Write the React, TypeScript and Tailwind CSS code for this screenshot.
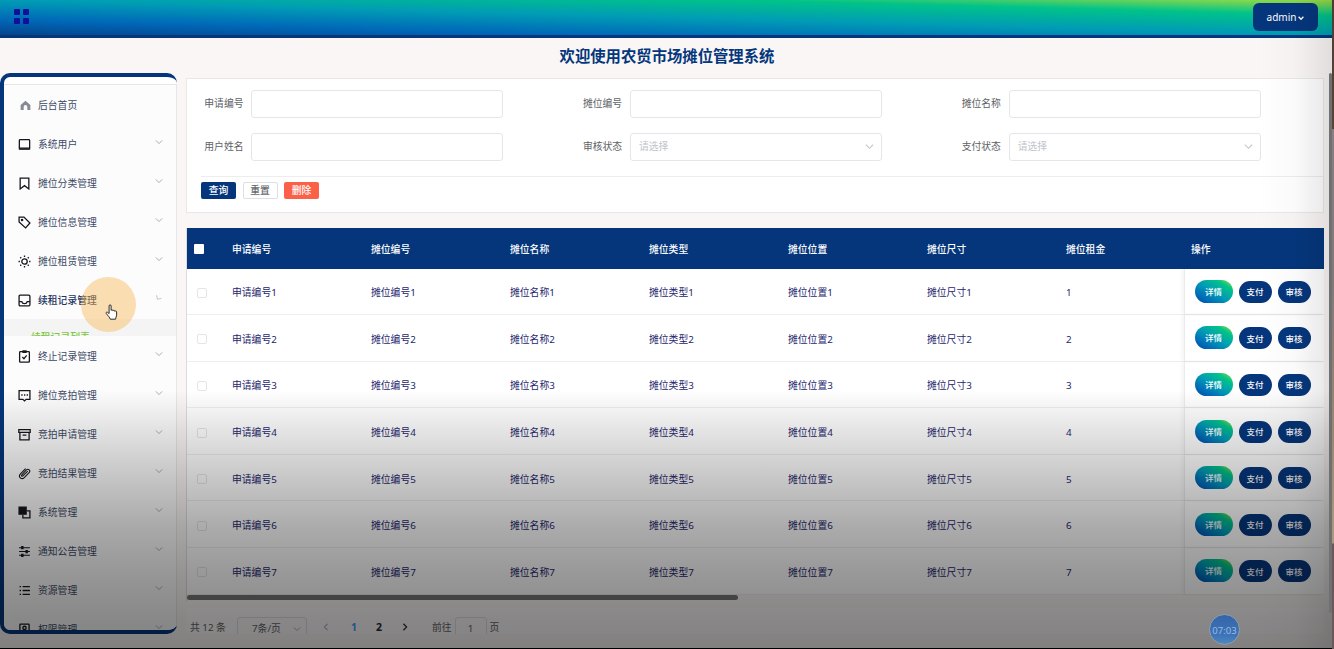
import type { ReactNode } from "react";

interface MenuItem {
  label: string;
  icon: ReactNode;
  open?: boolean;
}

const MENU: MenuItem[] = [
  {
    label: "系统用户",
    icon: (
      <>
        <rect x="2.500" y="3" width="19" height="17" rx="1.5" />
        <path d="M1.500 19.500h21" strokeWidth="5" className="opacity-70" />
      </>
    ),
  },
  { label: "摊位分类管理", icon: <path d="M4 2h16v20l-8-6-8 6z" /> },
  {
    label: "摊位信息管理",
    icon: (
      <>
        <path d="M2 2h9l11 11-8 9L2 11z" />
        <circle cx="7.5" cy="7.5" r="1.2" />
      </>
    ),
  },
  {
    label: "摊位租赁管理",
    icon: (
      <>
        <circle cx="12" cy="12" r="5" />
        <path d="M12 1v2.5M12 20.5V23M1 12h2.5M20.5 12H23M4.2 4.2 6 6M18 18l1.8 1.8M4.2 19.8 6 18M18 6l1.8-1.8" />
      </>
    ),
  },
  {
    label: "续租记录管理",
    open: true,
    icon: (
      <>
        <rect x="2" y="2" width="20" height="20" rx="2" />
        <path d="M2 14h5c1 5 9 5 10 0h5" />
      </>
    ),
  },
  {
    label: "终止记录管理",
    icon: (
      <>
        <rect x="3" y="3" width="18" height="19.500" rx="1.500" />
        <path d="M8 3h8" strokeWidth="5" />
        <path d="m8 13 3 3 5-6" />
      </>
    ),
  },
  {
    label: "摊位竞拍管理",
    icon: (
      <>
        <path d="M2 3h20v16h-7l-3 3-3-3H2z" />
        <path d="M6 11h2.500M11 11h2.500M16 11h2.500" strokeWidth="3" />
      </>
    ),
  },
  {
    label: "竞拍申请管理",
    icon: <path d="M1.500 3h21v5h-21zM3.500 8v14h17V8M8.500 13h7" />,
  },
  {
    label: "竞拍结果管理",
    icon: (
      <path
        d="m18 7.500-9 9c-1.500 1.500-3.500-.5-2-2L15.500 5.500c3.500-3.500 8.500 1 5 5L11.500 19.500C6.500 24.500-.5 18 4.500 12.500l9.500-9.500"
        strokeWidth="2"
      />
    ),
  },
  {
    label: "系统管理",
    icon: (
      <>
        <path d="M2 2h13v13H2z" fill="currentColor" />
        <path d="M16 9h6v13H9v-6" />
      </>
    ),
  },
  {
    label: "通知公告管理",
    icon: (
      <>
        <path d="M2 5h20M2 12h20M2 19h20" strokeWidth="2" />
        <path d="M8 2v6M16 9v6M8 16v6" strokeWidth="4.500" />
      </>
    ),
  },
  {
    label: "资源管理",
    icon: <path d="M3 5h2.500M8.500 5H22M3 12h2.500M8.500 12H22M3 19h2.500M8.500 19H22" />,
  },
  {
    label: "权限管理",
    icon: (
      <>
        <rect x="3.500" y="2" width="17" height="20" rx="1" />
        <circle cx="12" cy="9" r="3" />
        <path d="M6 19c1-6 11-6 12 0" />
      </>
    ),
  },
];

const COLUMNS = ["申请编号", "摊位编号", "摊位名称", "摊位类型", "摊位位置", "摊位尺寸", "摊位租金"];
const ROWS = [1, 2, 3, 4, 5, 6, 7];

function Chevron({ className }: { className: string }) {
  return (
    <svg viewBox="0 0 10 10" className={className} fill="none" stroke="currentColor" strokeWidth="1.200">
      <path d="m1 3 4 4 4-4" />
    </svg>
  );
}

function Sidebar() {
  return (
    <aside className="flex h-[561px] w-[177px] shrink-0 flex-col overflow-hidden rounded-[10px] border-y-[4px] border-l-[4px] border-[#05367c] bg-white pt-[7px]">
      <nav className="flex w-full flex-col border-t border-r border-[#e6e6e8] bg-[#fcfcfc] text-[#3c4a66]">
        <div className="flex h-[39px] shrink-0 items-center pl-4">
          <svg viewBox="0 0 12 12" className="mt-px size-[11px] fill-[#868a94]">
            <path d="M6 .8 11.300 5.500V11H8V7.500a2 2 0 0 0-4 0V11H.7V5.500z" />
          </svg>
          <span className="mt-px ml-[7px]">后台首页</span>
        </div>
        {MENU.map((item) => (
          <div key={item.label} className="shrink-0">
            <div className="flex h-[39px] items-center pr-[13px] pl-[14px]">
              <svg
                viewBox="0 0 24 24"
                className="mt-px size-[13px] text-[#15171c]"
                fill="none"
                stroke="currentColor"
                strokeWidth="2.400"
              >
                {item.icon}
              </svg>
              <span className={item.open ? "mt-px ml-[7px] font-medium text-[#1d3561]" : "mt-px ml-[7px]"}>{item.label}</span>
              {item.open ? (
                <svg viewBox="0 0 10 10" className="mb-[4px] ml-auto size-2 text-[#b4b8be]" fill="none" stroke="currentColor">
                  <path d="M2 1.500l1 5 5-1" />
                </svg>
              ) : (
                <Chevron className="mb-[3px] ml-auto size-2 text-[#a4a8ae]" />
              )}
            </div>
            {item.open && (
              <div className="h-[17px] overflow-hidden bg-[#f4f4f4] pt-[11px] pl-[27px] leading-[15px] font-medium text-[#7cc83c]">
                续租记录列表
              </div>
            )}
          </div>
        ))}
      </nav>
    </aside>
  );
}

function Field({ label, select }: { label: string; select?: boolean }) {
  return (
    <div className="flex w-[378.700px] items-center">
      <span className="w-[39px] whitespace-nowrap text-[#606266]">{label}</span>
      <div className="ml-2 flex h-7 w-[252px] items-center justify-between rounded-[3px] border border-[#e4e6e9] bg-white px-2 text-[#c0c4cc]">
        {select && (
          <>
            <span>请选择</span>
            <Chevron className="-mr-px size-[9px]" />
          </>
        )}
      </div>
    </div>
  );
}

function SearchPanel() {
  return (
    <section className="h-[135px] border border-[#e9e7e7] bg-white pt-[10.500px]">
      <div className="grid gap-y-[15px] pl-[17.300px]">
        <div className="flex">
          <Field label="申请编号" />
          <Field label="摊位编号" />
          <Field label="摊位名称" />
        </div>
        <div className="flex">
          <Field label="用户姓名" />
          <Field label="审核状态" select />
          <Field label="支付状态" select />
        </div>
      </div>
      <div className="mt-[15px] ml-[14px] flex gap-[6.500px] border-t border-[#ededed] pt-[5.500px] font-medium">
        <button className="h-[17px] w-[35px] rounded-[2px] bg-[#05367c] leading-[18px] text-white">查询</button>
        <button className="h-[17px] w-[35px] rounded-[2px] border border-[#dcdfe6] leading-[16px] text-[#66696e]">重置</button>
        <button className="h-[17px] w-[35px] rounded-[2px] bg-[#fb6048] leading-[18px] text-white">删除</button>
      </div>
    </section>
  );
}

function DataTable() {
  return (
    <section className="mt-[15px] border-l border-[#dcdcdf]">
      <div className="flex h-[40.500px] items-center bg-[#05367c] pt-[2px] font-medium text-white">
        <div className="w-[45px] pl-[7px]">
          <div className="size-[10px] rounded-[1px] bg-white" />
        </div>
        {COLUMNS.map((col) => (
          <div key={col} className="w-[139px]">
            {col}
          </div>
        ))}
        <div className="-ml-[14px]">操作</div>
      </div>
      {ROWS.map((n) => (
        <div key={n} className="flex h-[46.600px] border-b border-[#eeeeef] bg-white text-[#26266e]">
          <div className="flex min-w-0 flex-1 items-center pt-[3px]">
            <div className="w-[45px] shrink-0 pl-[9.500px]">
              <div className="size-[10px] rounded-[2px] border border-[#e3e5e9]" />
            </div>
            {COLUMNS.map((col, i) => (
              <div key={col} className="w-[139px] shrink-0">
                {i === COLUMNS.length - 1 ? n : `${col}${n}`}
              </div>
            ))}
          </div>
          <div className="flex w-[140.500px] items-center border-l border-[#ebebed] pl-[10px] text-[8.500px] font-medium text-white shadow-[-2px_0_4px_rgba(0,0,0,0.05)]">
            <button className="h-[23px] w-[38px] rounded-full bg-[linear-gradient(to_top_right,#05489b,#0068b8_20%,#009cb5_50%,#00c389_78%,#a5dc35)]">
              详情
            </button>
            <button className="mt-px ml-[6px] h-[22px] w-[33px] rounded-full bg-[#05367c]">支付</button>
            <button className="mt-px ml-[6px] h-[22px] w-[33px] rounded-full bg-[#05367c]">审核</button>
          </div>
        </div>
      ))}
      <div className="h-[6px]">
        <div className="h-[5px] w-[551px] rounded-full bg-[#777777]" />
      </div>
    </section>
  );
}

function Pagination() {
  return (
    <div className="mt-[7.500px] flex h-[26px] items-start overflow-hidden bg-white/40 pl-1 leading-[22px] text-[#606266]">
      <span className="w-[47px] pt-[9px]">共 12 条</span>
      <div className="mt-[9px] flex h-[24px] w-[70px] shrink-0 items-center justify-between rounded-[3px] border border-[#dcdfe6] pr-[5px] pl-[14px] text-[#606266]">
        <span>7条/页</span>
        <Chevron className="size-2 text-[#a9adb5]" />
      </div>
      <div className="flex w-[125px] shrink-0 pt-[8px] text-[10.500px] font-bold">
        <svg viewBox="0 0 10 10" className="mt-[7px] ml-[15px] size-2 text-[#a9adb5]" fill="none" stroke="currentColor" strokeWidth="1.300">
          <path d="M7 1 3 5l4 4" />
        </svg>
        <span className="ml-[19px] w-[10px] text-center text-[#409eff]">1</span>
        <span className="ml-[15px] w-[10px] text-center text-[#252633]">2</span>
        <svg viewBox="0 0 10 10" className="mt-[7px] ml-[17px] size-2 text-[#303133]" fill="none" stroke="currentColor" strokeWidth="1.600">
          <path d="m3 1 4 4-4 4" />
        </svg>
      </div>
      <span className="pt-[9px]">前往</span>
      <div className="mt-[9px] ml-[3px] h-[24px] w-[32px] rounded-[3px] border border-[#dcdfe6] text-center">1</div>
      <span className="ml-[3px] pt-[9px]">页</span>
    </div>
  );
}

export default function App() {
  return (
    <div className="relative flex h-[649px] w-[1334px] flex-col overflow-hidden bg-[#faf6f5] font-['Noto_Sans','Noto_Sans_CJK_SC',sans-serif] text-[9.800px] leading-[15px]">
      <header className="flex h-[38px] shrink-0 items-start justify-between border-b-[3px] border-[#05367c] bg-[linear-gradient(to_top_right,#05458c,#0068b8_22%,#009cb5_50%,#00c389_78%,#9fdc40)] pr-4 pl-[14px]">
        <div className="mt-[9px] grid grid-cols-2 gap-[3px]">
          <i className="size-[6px] rounded-[1px] bg-[#10109a]" />
          <i className="size-[6px] rounded-[1px] bg-[#10109a]" />
          <i className="size-[6px] rounded-[1px] bg-[#10109a]" />
          <i className="size-[6px] rounded-[1px] bg-[#10109a]" />
        </div>
        <button className="mt-[3px] flex h-7 w-[65px] items-center justify-center gap-[2px] rounded-[6px] bg-[#05367c] text-[10px] text-white">
          admin
          <svg viewBox="0 0 10 10" className="mt-px size-[6px]" fill="none" stroke="currentColor" strokeWidth="2.200">
            <path d="m1 3 4 4 4-4" />
          </svg>
        </button>
      </header>
      <h1 className="h-[35px] shrink-0 text-center text-[15.350px] leading-[36px] font-bold text-[#05367c]">
        欢迎使用农贸市场摊位管理系统
      </h1>
      <div className="flex">
        <Sidebar />
        <main className="w-[1147px] pt-[5px] pl-[9px]">
          <SearchPanel />
          <DataTable />
          <Pagination />
        </main>
      </div>

      {/* click highlight and pointer */}
      <div className="absolute top-[277px] left-[81px] size-[55px] rounded-full bg-[#f9b957]/45" />
      <svg viewBox="0 0 16 20" className="absolute top-[304px] left-[105px] h-[16px] w-[13px]" fill="white" stroke="#222" strokeWidth="1.200">
        <path d="M5 12V2.500c0-2 2.500-2 2.500 0V8c.5-1 2.300-.8 2.300.5.5-1 2.300-.7 2.300.6.6-.8 2.300-.4 2.300.9v4c0 2-1.400 3-1.400 5H6.500C6 17 3.500 14.500 1.500 12c-1-1.500.8-2.500 2-1.300z" />
      </svg>

      {/* shade along the right and bottom edges */}
      <div className="absolute inset-y-0 right-[2px] w-[74px] bg-[linear-gradient(to_right,transparent,rgba(0,0,0,0.02)_50%,rgba(0,0,0,0.10))]" />
      <div className="absolute inset-x-0 top-[390px] bottom-0 bg-[linear-gradient(to_bottom,transparent,rgba(0,0,0,0.10)_15%,rgba(0,0,0,0.22)_34%,rgba(0,0,0,0.33)_53%,rgba(0,0,0,0.40)_70%,rgba(0,0,0,0.46)_88%,rgba(0,0,0,0.48))]" />

      <div className="absolute top-[73px] right-[2px] h-[540px] w-[3px] rounded-full bg-[#6f7072]" />
      <div className="absolute top-0 right-0 h-full w-[2px] bg-[linear-gradient(to_bottom,#4a3c35,#5b4436_129px,#8b7d82_129px,#857878_280px,#9b8670_430px,#ab9a80_543px,#6b5858_544px)]" />
      <div className="absolute bottom-0 left-0 h-px w-[1332px] bg-black" />

      <div className="absolute top-[614px] left-[1209px] flex size-[31px] items-center justify-center rounded-full border border-[#8f9dab] bg-[linear-gradient(to_bottom,#3565a8,#3c73bb_70%,#5189bd)] pt-px text-[9.500px] text-[#9fbbdb]">
        07:03
      </div>
    </div>
  );
}
